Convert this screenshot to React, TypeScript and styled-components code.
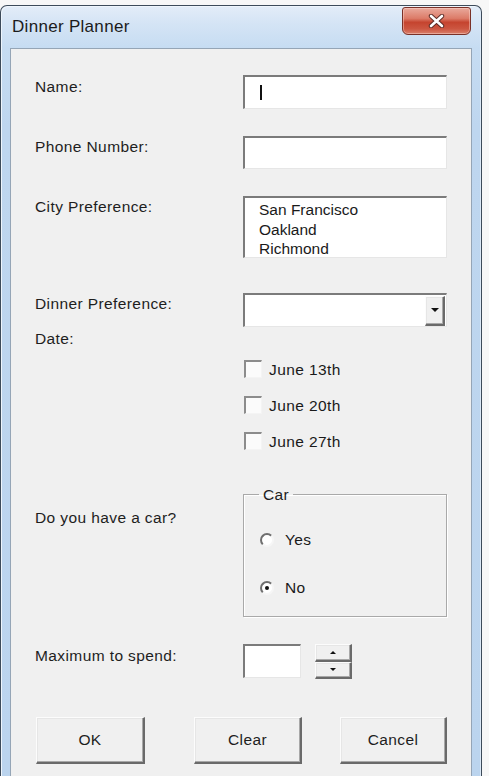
import React from 'react'
import styled, { createGlobalStyle, css } from 'styled-components'

const GlobalStyle = createGlobalStyle`
  html, body {
    margin     : 0;
    padding    : 0;
    background : #f7f7f7;
  }
  body {
    font-family : 'Liberation Sans', Arial, sans-serif;
    color       : #1a1a1a;
  }
  * { box-sizing : border-box; }
`

const sunken = css`
  background   : #fff;
  border-style : solid;
  border-width : 2px 1px 1px 2px;
  border-color : #7b7b7b #e6e6e6 #e6e6e6 #7b7b7b;
`

const raised = css`
  background   : #f0f0f0;
  border-style : solid;
  border-width : 1px 2px 2px 1px;
  border-color : #fcfcfc #6a6a6a #6a6a6a #fcfcfc;
  box-shadow   : inset -1px -1px 0 #a8a8a8, inset 1px 1px 0 #e6e6e6;
`

const Page = styled.div`
  width       : 489px;
  height      : 776px;
  padding-top : 5px;
  overflow    : hidden;
`

const Window = styled.div`
  width          : 482px;
  height         : 771px;
  display        : flex;
  flex-direction : column;
  padding        : 0 9px;
  border         : 1px solid #3d4b5a;
  border-bottom  : none;
  border-radius  : 7px 7px 0 0;
  background     : linear-gradient(to bottom, #e3edf8 0px, #d4e4f5 18px, #c6dcf2 42px, #bed6ef 120px, #bbd4ee 100%);
  box-shadow     : inset 1px 1px 0 #eef5fc, inset -1px 0 0 #dbe8f6;
`

const TitleBar = styled.div`
  height          : 42px;
  display         : flex;
  justify-content : space-between;
  align-items     : flex-start;
`

const Title = styled.div`
  padding        : 11px 0 0 2px;
  font-size      : 17px;
  line-height    : 20px;
  letter-spacing : .3px;
  color          : #1b1b1b;
`

const CloseButton = styled.div`
  width           : 69px;
  height          : 28px;
  margin          : 1px 1px 0 0;
  display         : flex;
  align-items     : center;
  justify-content : center;
  border          : 1px solid #7a3128;
  border-radius   : 3px 3px 6px 6px;
  background      : linear-gradient(to bottom, #e9a99c 0%, #dc7b68 40%, #c5442f 55%, #cc5641 80%, #d9806c 100%);
  box-shadow      : inset 0 0 0 1px rgba(255, 220, 210, .45);
`

const Client = styled.div`
  flex          : 1;
  background    : #f0f0f0;
  border        : 1px solid #95a5b6;
  border-bottom : none;
  padding       : 0 24px;
`

const Row = styled.div<{ $mt: number }>`
  display               : grid;
  grid-template-columns : 208px 204px;
  margin-top            : ${p => p.$mt}px;
`

const Label = styled.div<{ $pt?: number }>`
  font-size      : 15.5px;
  line-height    : 17px;
  letter-spacing : .4px;
  padding-top    : ${p => p.$pt ?? 2}px;
  color          : #1e1e1e;
`

const Field = styled.div<{ $w: number; $h: number }>`
  ${sunken};
  width  : ${p => p.$w}px;
  height : ${p => p.$h}px;
`

const Caret = styled.span`
  display    : block;
  width      : 2px;
  height     : 15px;
  margin     : 8px 0 0 15px;
  background : #111;
`

const ListBox = styled(Field)`
  padding     : 2px 0 0 14px;
  font-size   : 15.5px;
  line-height : 19.5px;
  overflow    : hidden;
  color       : #1a1a1a;
`

const Combo = styled(Field)`
  display         : flex;
  justify-content : flex-end;
  align-items     : center;
  padding-right   : 1px;
`

const DropButton = styled.div`
  ${raised};
  width           : 20px;
  height          : 30px;
  display         : flex;
  align-items     : center;
  justify-content : center;
`

const Arrow = styled.span<{ $up?: boolean; $size: number }>`
  width        : 0;
  height       : 0;
  border-left  : ${p => p.$size}px solid transparent;
  border-right : ${p => p.$size}px solid transparent;
  ${p => p.$up
    ? `border-bottom : ${p.$size}px solid #111;`
    : `border-top : ${p.$size}px solid #111;`}
`

const CheckList = styled.div`
  display        : flex;
  flex-direction : column;
  gap            : 18px;
  padding-top    : 33px;
`

const CheckItem = styled.div`
  display        : flex;
  align-items    : center;
  gap            : 7px;
  height         : 18px;
  font-size      : 15.5px;
  line-height    : 18px;
  letter-spacing : .4px;
`

const CheckBox = styled.span`
  width        : 18px;
  height       : 18px;
  margin-left  : 1px;
  margin-top   : -2px;
  background   : #fbfbfb;
  border-style : solid;
  border-width : 2px 1px 1px 2px;
  border-color : #8c8c8c #f4f4f4 #f4f4f4 #8c8c8c;
`

const GroupBox = styled.fieldset`
  margin     : 0;
  min-width  : 0;
  width      : 204px;
  padding    : 0 15px 20px;
  border     : 1px solid #a9a9a9;
  box-shadow : inset 1px 1px 0 #fff, 1px 1px 0 #fff;
`

const Legend = styled.legend`
  padding        : 0 4px;
  font-size      : 15.5px;
  line-height    : 17px;
  letter-spacing : .4px;
  color          : #1e1e1e;
`

const RadioList = styled.div`
  display        : flex;
  flex-direction : column;
  gap            : 31px;
  margin-top     : 28px;
`

const RadioItem = styled.div`
  display        : flex;
  align-items    : center;
  gap            : 11px;
  height         : 17px;
  font-size      : 15.5px;
  letter-spacing : .4px;
`

const Radio = styled.span<{ $checked?: boolean }>`
  width           : 14px;
  height          : 14px;
  margin-left     : 1px;
  border-radius   : 50%;
  background      : #fff;
  border          : 2px solid;
  border-color    : #6f6f6f #f6f6f6 #f6f6f6 #6f6f6f;
  display         : flex;
  align-items     : center;
  justify-content : center;

  &::after {
    content       : '';
    width         : 4px;
    height        : 4px;
    border-radius : 50%;
    background    : ${p => (p.$checked ? '#111' : 'transparent')};
  }
`

const Controls = styled.div`
  display : flex;
  gap     : 14px;
`

const Spin = styled.div`
  width          : 37px;
  height         : 35px;
  display        : flex;
  flex-direction : column;
`

const SpinButton = styled.div`
  ${raised};
  flex            : 1;
  display         : flex;
  align-items     : center;
  justify-content : center;
`

const ButtonRow = styled.div`
  display    : flex;
  margin-top : 38px;
`

const Button = styled.div<{ $w: number; $ml: number }>`
  ${raised};
  width           : ${p => p.$w}px;
  height          : 47px;
  margin-left     : ${p => p.$ml}px;
  display         : flex;
  align-items     : center;
  justify-content : center;
  font-size       : 15.5px;
  letter-spacing  : .4px;
  color           : #1e1e1e;
`

const CloseGlyph = () => (
  <svg width='17' height='14' viewBox='0 0 17 14'>
    <path d='M3 2 L14 12 M14 2 L3 12' stroke='#5a2a24' strokeWidth='4.4' strokeLinecap='round'/>
    <path d='M3 2 L14 12 M14 2 L3 12' stroke='#ffffff' strokeWidth='2.6' strokeLinecap='round'/>
  </svg>
)

const App = () => (
  <Page>
    <GlobalStyle/>
    <Window>
      <TitleBar>
        <Title>Dinner Planner</Title>
        <CloseButton><CloseGlyph/></CloseButton>
      </TitleBar>
      <Client>
        <Row $mt={26}>
          <Label $pt={3}>Name:</Label>
          <Field $w={204} $h={34}><Caret/></Field>
        </Row>
        <Row $mt={27}>
          <Label>Phone Number:</Label>
          <Field $w={204} $h={33}/>
        </Row>
        <Row $mt={27}>
          <Label>City Preference:</Label>
          <ListBox $w={204} $h={62}>
            <div>San Francisco</div>
            <div>Oakland</div>
            <div>Richmond</div>
          </ListBox>
        </Row>
        <Row $mt={35}>
          <Label>Dinner Preference:</Label>
          <Combo $w={204} $h={34}>
            <DropButton><Arrow $size={4}/></DropButton>
          </Combo>
        </Row>
        <Row $mt={1}>
          <Label>Date:</Label>
          <CheckList>
            {[ 'June 13th', 'June 20th', 'June 27th' ].map( d => (
              <CheckItem key={d}><CheckBox/>{d}</CheckItem>
            ) )}
          </CheckList>
        </Row>
        <Row $mt={35}>
          <Label $pt={23}>Do you have a car?</Label>
          <GroupBox>
            <Legend>Car</Legend>
            <RadioList>
              <RadioItem><Radio/>Yes</RadioItem>
              <RadioItem><Radio $checked/>No</RadioItem>
            </RadioList>
          </GroupBox>
        </Row>
        <Row $mt={27}>
          <Label $pt={3}>Maximum to spend:</Label>
          <Controls>
            <Field $w={58} $h={34}/>
            <Spin>
              <SpinButton><Arrow $up $size={3}/></SpinButton>
              <SpinButton><Arrow $size={3}/></SpinButton>
            </Spin>
          </Controls>
        </Row>
        <ButtonRow>
          <Button $w={109} $ml={1}>OK</Button>
          <Button $w={108} $ml={49}>Clear</Button>
          <Button $w={107} $ml={38}>Cancel</Button>
        </ButtonRow>
      </Client>
    </Window>
  </Page>
)

export default App
